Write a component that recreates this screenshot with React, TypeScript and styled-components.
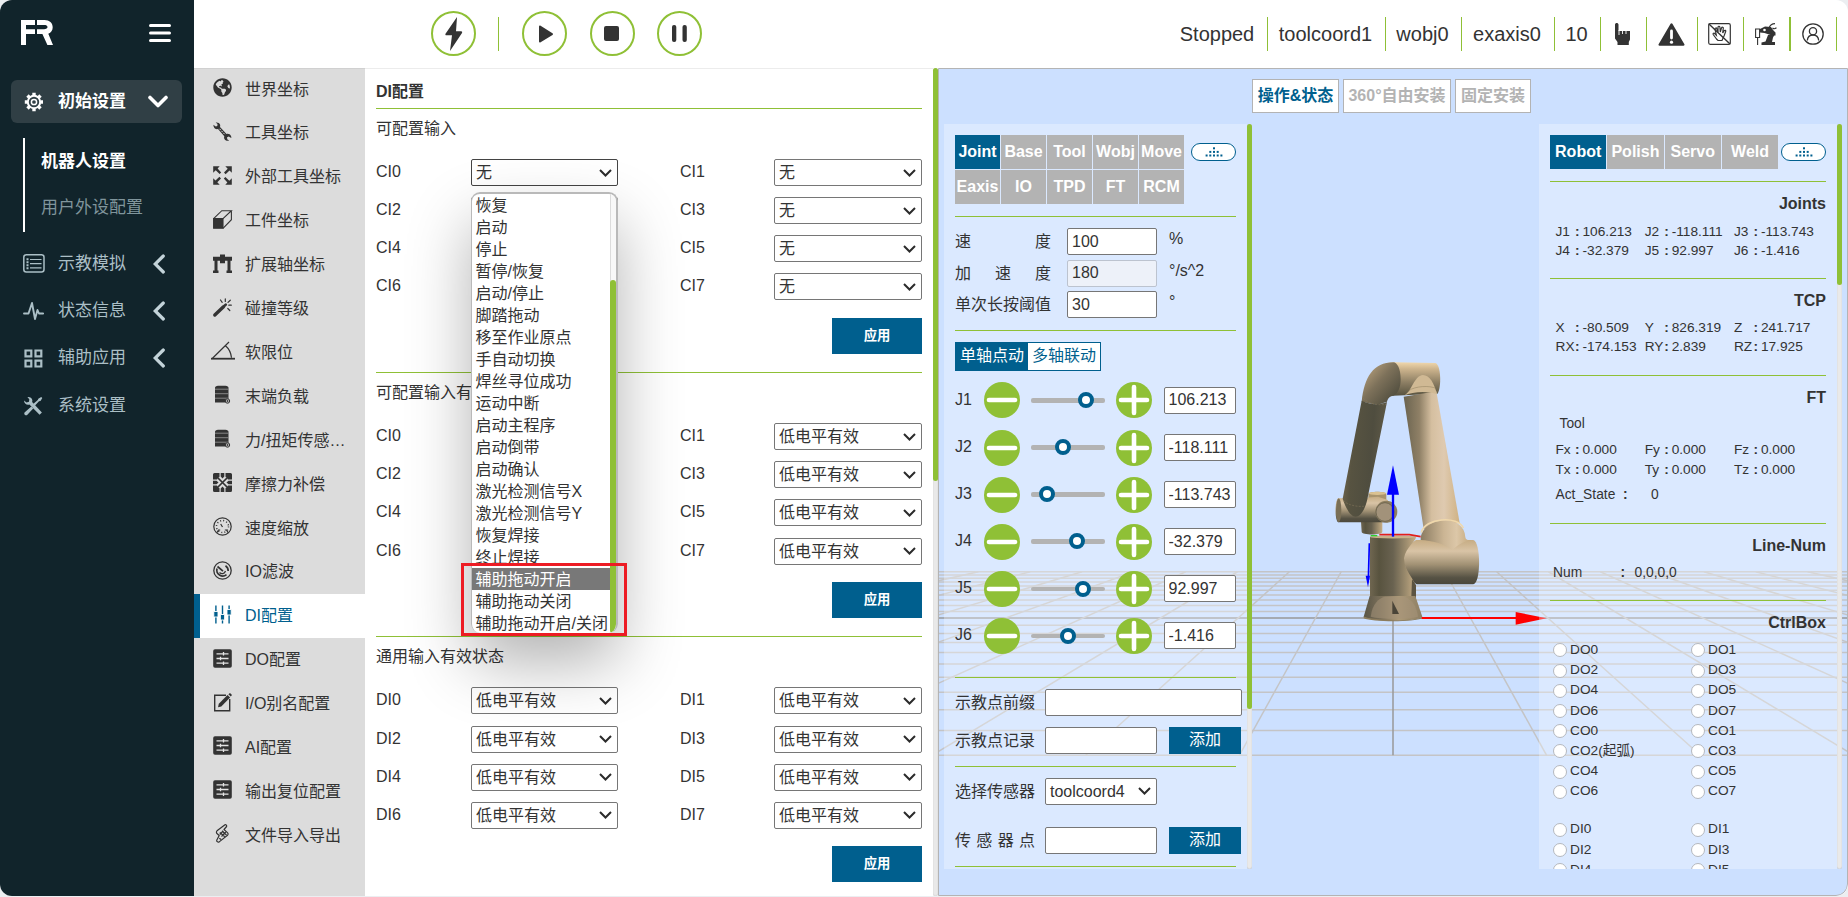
import React from "react";
import styled, { createGlobalStyle, css } from "styled-components";
import { FaGlobeAmericas } from "react-icons/fa";

const GREEN = "#8fc036";
const BLUE = "#005f8e";
const GREY = "#b3b3b3";
const INK = "#333333";

const GlobalStyle = createGlobalStyle`
  * { box-sizing: border-box; }
  html, body { margin: 0; height: 897px; overflow: hidden; background: #eceef1; }
  body { font-family: "Liberation Sans", "Noto Sans CJK SC", sans-serif; font-size: 16px; color: ${INK}; }
  input { font: inherit; color: inherit; }
`;

/* ---------- shell ---------- */
const Shell = styled.div`
  display: flex;
  width: 1848px;
  height: 896px;
  border-radius: 12px;
  overflow: hidden;
  background: #fff;
`;
const Body = styled.div`
  flex: 1;
  display: flex;
  flex-direction: column;
  min-width: 0;
`;
const Columns = styled.div`
  flex: 1;
  display: flex;
  min-height: 0;
`;

/* ---------- primary sidebar ---------- */
const Sidebar = styled.nav`
  width: 194px;
  flex: none;
  background: #11242b;
  color: #abbfc6;
  font-size: 17px;
`;
const Brand = styled.div`
  display: flex;
  justify-content: space-between;
  padding: 20px 23px 0 21px;
  height: 80px;
`;
const NavItem = styled.div<{ $active?: boolean }>`
  display: flex;
  align-items: center;
  height: ${(p) => (p.$active ? "43px" : "47.3px")};
  margin: 0 12px 0 11px;
  padding: 0 14px 0 12px;
  border-radius: 6px;
  ${(p) =>
    p.$active &&
    css`
      background: #303f45;
      color: #fff;
      font-weight: bold;
    `}
`;
const NavIcon = styled.span`
  display: flex;
  width: 35px;
`;
const NavText = styled.span`
  flex: 1;
  line-height: 20px;
`;
const SubNav = styled.div`
  margin: 15px 0 8px 23px;
  height: 94px;
  border-left: 2px solid #fff;
  padding: 1px 0 0 16px;
  display: flex;
  flex-direction: column;
`;
const SubNavItem = styled.div<{ $active?: boolean }>`
  height: 46px;
  line-height: 46px;
  color: ${(p) => (p.$active ? "#fff" : "#80959c")};
  font-weight: ${(p) => (p.$active ? "bold" : "normal")};
`;

/* ---------- top bar ---------- */
const TopBar = styled.header`
  height: 68px;
  flex: none;
  display: flex;
  align-items: flex-start;
  justify-content: space-between;
  padding: 0 11px 0 237px;
`;
const Controls = styled.div`
  display: flex;
  padding-top: 11px;
`;
const RoundButton = styled.div`
  width: 45px;
  height: 45px;
  border: 2px solid ${GREEN};
  border-radius: 50%;
  display: grid;
  place-items: center;
  margin-right: 22.300px;
`;
const ControlRule = styled.div`
  width: 1px;
  height: 34px;
  margin: 6px 23px 0 0;
  background: ${GREEN};
`;
const StatusBar = styled.div`
  display: flex;
  padding-top: 17px;
`;
const Status = styled.div<{ $w: number; $thick?: boolean }>`
  width: ${(p) => p.$w}px;
  height: 34px;
  display: flex;
  align-items: center;
  justify-content: center;
  padding-right: 2px;
  font-size: 20px;
  border-right: ${(p) => (p.$thick ? 2 : 1)}px solid ${GREEN};
`;

/* ---------- secondary menu ---------- */
const Menu = styled.nav`
  width: 171px;
  flex: none;
  background: #dcdcdc;
  border-top: 1px solid #d0d0d0;
`;
const MenuItem = styled.div<{ $active?: boolean }>`
  height: 43.9px;
  display: flex;
  align-items: center;
  padding: 0 17px 3.500px 19px;
  &:first-child { margin-top: -1.600px; }
  ${(p) =>
    p.$active &&
    css`
      background: #fff;
      color: ${BLUE};
      border-left: 6px solid ${BLUE};
      padding-left: 13px;
    `}
`;
const MenuIcon = styled.span`
  width: 32px;
  height: 19px;
  display: flex;
  flex: none;
  svg { overflow: visible; }
`;
const MenuText = styled.span`
  white-space: nowrap;
  overflow: hidden;
  text-overflow: ellipsis;
`;

/* ---------- DI configuration ---------- */
const Config = styled.main`
  width: 568px;
  flex: none;
  padding: 0 11px;
  border-top: 1px solid #ececec;
`;
const Heading = styled.div`
  height: 40px;
  line-height: 45px;
  font-weight: bold;
  border-bottom: 1px solid ${GREEN};
`;
const Section = styled.section`
  height: 264.200px;
  border-bottom: 1px solid ${GREEN};
  &:last-child { border: 0; }
`;
const SectionTitle = styled.div`
  height: 50px;
  line-height: 40px;
`;
const FieldGrid = styled.div`
  display: grid;
  grid-template-columns: 95px 147px 62px 94px 148px;
  grid-auto-rows: 27px;
  row-gap: 11.130px;
`;
const FieldLabel = styled.span`
  line-height: 25px;
`;
const SelectBox = styled.div<{ $w?: number; $focus?: boolean }>`
  display: flex;
  align-items: center;
  justify-content: space-between;
  width: ${(p) => (p.$w ? `${p.$w}px` : "auto")};
  height: 27px;
  padding: 0 5px 0 4px;
  border: 1px solid ${(p) => (p.$focus ? "#444" : "#767676")};
  border-radius: 2px;
  background: #fff;
  line-height: 25px;
`;
const Apply = styled.div`
  width: 90px;
  height: 36px;
  margin: 17.600px 0 0 auto;
  background: ${BLUE};
  color: #fff;
  font-weight: bold;
  font-size: 13.330px;
  line-height: 36px;
  text-align: center;
`;
const DropAnchor = styled.div`
  position: relative;
  > ${SelectBox} { background: transparent; }
`;
const DropList = styled.div`
  position: absolute;
  z-index: 5;
  top: 33px;
  left: 0;
  width: 147px;
  height: 441px;
  border: 2px solid #b9b9b9;
  border-left-width: 1.500px;
  border-bottom-width: 0;
  border-radius: 9px;
  background: #fff;
  overflow: hidden;
  display: flex;
`;
const DropShadow = styled.div`
  position: absolute;
  z-index: 4;
  top: 33px;
  left: 0;
  width: 147px;
  height: 441px;
  border-radius: 9px;
  box-shadow: 0 30px 64px rgba(0, 0, 0, 0.3);
`;
const Options = styled.div`
  flex: 1;
  white-space: nowrap;
  overflow: hidden;
`;
const Option = styled.div<{ $on?: boolean }>`
  height: 22px;
  line-height: 23.500px;
  padding-left: 3.500px;
  background: ${(p) => (p.$on ? "#787878" : "transparent")};
  color: ${(p) => (p.$on ? "#fff" : INK)};
`;
const RedFrame = styled.div`
  position: absolute;
  z-index: 6;
  top: 404px;
  left: -10px;
  width: 166px;
  height: 73px;
  border: 3px solid #ed1c24;
`;

/* ---------- scroll bars ---------- */
const Track = styled.div<{ $w: number; $light?: boolean }>`
  width: ${(p) => p.$w}px;
  flex: none;
  border-radius: ${(p) => (p.$light ? 0 : 3)}px;
  background: ${(p) => (p.$light ? "#f8f8f8" : "#e9e9e9")};
  box-shadow: inset ${(p) => (p.$light ? "1px 0 0 0 #dcdcdc" : "0 0 1px 0 #aaa")};
`;
const Thumb = styled.div<{ $h: number }>`
  height: ${(p) => p.$h}px;
  border-radius: 3px;
  background: ${GREEN};
`;
const Spacer = styled.div<{ $h: number }>`
  height: ${(p) => p.$h}px;
`;

/* ---------- robot viewport ---------- */
const Viewport = styled.div`
  position: relative;
  flex: 1;
  border: 1px solid #b4b4b4;
  border-radius: 0 0 12px 0;
  background: #cce0ff;
  overflow: hidden;
`;
const Scene = styled.svg`
  position: absolute;
  left: 0;
  top: 0;
`;
const Overlay = styled.div`
  position: relative;
  display: flex;
  flex-direction: column;
`;
const ViewTabs = styled.div`
  display: flex;
  gap: 4px;
  height: 55px;
  padding: 10px 0 0 313px;
`;
const ViewTab = styled.div<{ $w: number; $active?: boolean }>`
  width: ${(p) => p.$w}px;
  height: 34px;
  background: #fff;
  border: 1px solid ${GREY};
  color: ${(p) => (p.$active ? BLUE : GREY)};
  font-weight: bold;
  line-height: 31px;
  text-align: center;
  white-space: nowrap;
`;
const Panels = styled.div`
  display: flex;
  justify-content: space-between;
  padding: 0 5px;
  height: 744.700px;
`;
const Panel = styled.div`
  display: flex;
  overflow: hidden;
`;
const PanelBody = styled.div<{ $w: number }>`
  width: ${(p) => p.$w}px;
  padding: 11px 0 0 11px;
  background: rgba(255, 255, 255, 0.3);
  overflow: hidden;
`;
const Rule = styled.div<{ $w: number; $t: number; $b: number }>`
  width: ${(p) => p.$w}px;
  height: 1px;
  margin: ${(p) => p.$t}px 0 ${(p) => p.$b}px;
  background: ${GREEN};
`;
const TabHead = styled.div<{ $w: number }>`
  display: flex;
  align-items: flex-start;
  justify-content: space-between;
  width: ${(p) => p.$w}px;
`;
const TabGrid = styled.div<{ $cols: number; $cell: string }>`
  display: grid;
  grid-template-columns: repeat(${(p) => p.$cols}, ${(p) => p.$cell});
  grid-auto-rows: 34px;
  gap: 1px;
`;
const Tab = styled.div<{ $active?: boolean }>`
  display: flex;
  align-items: center;
  justify-content: center;
  padding: 0 0 1px;
  background: ${(p) => (p.$active ? BLUE : GREY)};
  color: #fff;
  font-weight: bold;
  overflow: hidden;
`;
const Pill = styled.div`
  width: 45px;
  height: 18px;
  margin-top: 8px;
  border: 1.500px solid ${BLUE};
  border-radius: 10px;
  background: #fff;
  display: grid;
  place-items: center;
`;
const SpeedRow = styled.div`
  display: flex;
  height: 31.500px;
`;
const Spread = styled.span<{ $w: number }>`
  width: ${(p) => p.$w}px;
  line-height: 27px;
  text-align-last: justify;
  white-space: nowrap;
`;
const Input = styled.input<{ $w: number; $ml?: number; $pad?: number }>`
  width: ${(p) => p.$w}px;
  height: 27px;
  margin-left: ${(p) => p.$ml ?? 0}px;
  padding: 0 0 0 ${(p) => p.$pad ?? 4}px;
  border: 1px solid #767676;
  border-radius: 2px;
  background: #fff;
  outline: none;
  &:disabled {
    border-color: #bcc3cf;
    background: #edf1f9;
    color: ${INK};
  }
`;
const Unit = styled.span`
  margin-left: 12px;
  line-height: 21px;
`;
const Toggle = styled.div`
  display: flex;
  width: 146px;
  height: 29px;
  margin-bottom: 5.900px;
  border: 1px solid ${BLUE};
  background: #fff;
`;
const ToggleHalf = styled.div<{ $on?: boolean }>`
  width: 72px;
  line-height: 26px;
  text-align: center;
  background: ${(p) => (p.$on ? BLUE : "#fff")};
  color: ${(p) => (p.$on ? "#fff" : BLUE)};
`;
const JointRow = styled.div`
  display: flex;
  align-items: center;
  height: 47.100px;
`;
const JointName = styled.span`
  width: 29px;
  padding-bottom: 1px;
`;
const Slider = styled.div`
  position: relative;
  width: 74px;
  height: 4.500px;
  margin: 0 11px;
  border-radius: 2px;
  background: ${GREY};
`;
const Knob = styled.span`
  position: absolute;
  top: -6px;
  width: 16px;
  height: 16px;
  margin-left: -8px;
  border: 4px solid ${BLUE};
  border-radius: 50%;
  background: #fff;
`;
const FormRow = styled.div<{ $h: number }>`
  display: flex;
  height: ${(p) => p.$h}px;
`;
const AddButton = styled.div`
  width: 72px;
  height: 27px;
  margin-left: 12px;
  background: ${BLUE};
  color: #fff;
  line-height: 26px;
  text-align: center;
`;

/* ---------- status panel ---------- */
const InfoTitle = styled.div<{ $b: number }>`
  width: 276px;
  height: 20px;
  margin-bottom: ${(p) => p.$b}px;
  line-height: 21.500px;
  text-align: right;
  font-weight: bold;
`;
const InfoGrid = styled.div`
  display: grid;
  grid-template-columns: repeat(3, 89.200px);
  grid-auto-rows: 19.100px;
  padding-left: 5.500px;
  font-size: 13.700px;
  line-height: 19px;
`;
const Pair = styled.div`
  display: grid;
  grid-template-columns: 19.500px 7.500px auto;
  white-space: nowrap;
`;
const InfoLine = styled.div<{ $pad: number; $t: number; $cols: string }>`
  display: grid;
  grid-template-columns: ${(p) => p.$cols};
  height: 19px;
  margin-top: ${(p) => p.$t}px;
  padding-left: ${(p) => p.$pad}px;
  font-size: 13.800px;
  line-height: 20px;
`;
const LampGrid = styled.div<{ $t: number }>`
  display: grid;
  grid-template-columns: 138px 138px;
  grid-auto-rows: 20.200px;
  margin-top: ${(p) => p.$t}px;
  padding-left: 3px;
  font-size: 13.700px;
`;
const Lamp = styled.div`
  display: flex;
  align-items: center;
  gap: 3.500px;
  white-space: nowrap;
  line-height: 18px;
  &::before {
    content: "";
    width: 12px;
    height: 12px;
    margin-top: 1px;
    margin-left: -0.500px;
    border: 1px solid #b5b8be;
    border-radius: 50%;
    background: #fff;
  }
`;

/* ---------- icons ---------- */
const Chevron = () => (
  <svg width="13" height="8" viewBox="0 0 13 8" fill="none" stroke="#2b2b2b" strokeWidth="2">
    <path d="M1 1l5.500 5.500L12 1" />
  </svg>
);
const OpenChevron = () => (
  <svg width="20" height="13" viewBox="0 0 20 13" fill="none" stroke="#fff" strokeWidth="3.600" strokeLinejoin="round" strokeLinecap="round">
    <path d="M2 2.500l8 8 8-8" />
  </svg>
);
const ClosedChevron = () => (
  <svg width="15" height="20" viewBox="0 0 15 20" fill="none" stroke="#c3d3d9" strokeWidth="3.200" strokeLinecap="round">
    <path d="M10.300 2L2.200 10l8.100 8" />
  </svg>
);
const Dots = () => (
  <svg width="18" height="10" viewBox="0 0 18 10" fill={BLUE}>
    {[[9], [5.3, 9, 12.7], [1.6, 5.3, 9, 12.7, 16.4]].map((xs, r) =>
      xs.map((x) => <rect key={`${r}-${x}`} x={x - 1} y={0.3 + r * 3.6} width="2" height="2" />)
    )}
  </svg>
);
const Logo = () => (
  <svg width="32" height="25" viewBox="0 0 32 25" fill="#fff">
    <path d="M0 0h14v5H5v4.200h9V14H5v11H0z" />
    <path d="M16 0h7.500c5 0 8.200 3 8.200 7.300 0 3.200-1.700 5.500-4.400 6.400L32 25h-5.600l-5-11H16V9.200h7c2.200 0 3.500-.6 3.500-2.100S25.200 5 23 5h-7z" />
  </svg>
);
const Burger = () => (
  <svg width="22" height="23" viewBox="0 -4 22 23" stroke="#fff" strokeWidth="3" strokeLinecap="round">
    <path d="M1.500 1.500h19M1.500 9h19M1.500 16.500h19" />
  </svg>
);
const GearIcon = () => (
  <svg width="20" height="20" viewBox="0 0 20 20" fill="none" stroke="#fff">
    <circle cx="11" cy="10" r="6.200" strokeWidth="2" />
    <circle cx="11" cy="10" r="2.600" strokeWidth="1.500" />
    {[0, 45, 90, 135, 180, 225, 270, 315].map((a) => (
      <path key={a} d="M11 .8v2.600" strokeWidth="3.400" transform={`rotate(${a} 11 10)`} />
    ))}
  </svg>
);
const ListIcon = () => (
  <svg width="22" height="19" viewBox="0 0 22 19" fill="none" stroke="#abbfc6" strokeWidth="1.500">
    <rect x=".8" y=".8" width="20.200" height="17.200" rx="2.500" />
    <path d="M3.500 5.200h2M3.500 8.200h2M3.500 11.200h2M3.500 14.200h2" strokeWidth="1.900" />
    <path d="M7 5.500h11.500M7 9.700h11.500M7 13.900h11.500" strokeWidth="1.200" />
  </svg>
);
const PulseIcon = () => (
  <svg width="21" height="20" viewBox="0 0 21 20" fill="none" stroke="#abbfc6" strokeWidth="1.900" strokeLinejoin="round" strokeLinecap="round">
    <path d="M1 12.500h4.500L9 2l3 16 2.500-9 1.500 3.500h4.200" />
  </svg>
);
const GridIcon = () => (
  <svg width="20" height="19" viewBox="0 0 20 19" fill="none" stroke="#abbfc6" strokeWidth="2.200">
    <path d="M2.500 1.500h5.800v5.800H2.500zM12.500 1.500h5.800v5.800h-5.800zM2.500 11.700h5.800v5.800H2.500zM12.500 11.700h5.800v5.800h-5.800z" />
  </svg>
);
const ToolsIcon = () => (
  <svg width="20" height="20" viewBox="0 0 20 20" fill="#abbfc6">
    <path d="M1 4.500L3.500 6.600 6 5.800 6.300 3.200 4.400 1c2.200-.5 4.500.9 4.900 3 .1.700 0 1.400-.2 2l9.800 10.500-2.300 2.300L6.400 8.600C3.700 9.500 1 7.300 1 4.500z" />
    <path d="M15.300 2.800L18.200.9 19.300 2 17.500 5l-1.500.3-4.200 4.400-1.600-1.700 4.600-4zM8.300 10.600l1.900 1.900-5.800 6.300c-.7.700-1.900.7-2.600 0s-.7-1.800 0-2.500z" />
  </svg>
);

const box = { width: 19, height: 19, viewBox: "0 0 19 19" };
const DoubleWrench = () => (
  <svg {...box} fill={INK}>
    <path d="M.3 2.800l2.500 1.800 1.500-.7.200-2L2.700.6c1.800-.5 3.800.4 4.400 2.200.2.800.2 1.500-.1 2.200l6.500 7c1.800-.5 3.700.2 4.500 1.900.3.700.4 1.500.3 2.200l-2.600-1.700-1.600.8.100 2 1.900 1.400c-2 .6-4.300-.3-4.900-2.200-.2-.8-.2-1.500.1-2.200L5 7.100C3 7.600.5 6.500.3 2.800z" />
    <path d="M6.500 6.800l5.500 5.800" stroke="#dcdcdc" strokeWidth="1" strokeDasharray="1.800 1" />
  </svg>
);
const ExpandIcon = () => (
  <svg {...box} fill={INK}>
    {[0, 90, 180, 270].map((a) => (
      <path key={a} transform={`rotate(${a} 9.500 9.500)`} d="M.2.2h6.500L4.600 2.500 8.200 6.400 6.600 8 2.700 4.300.2 6.700z" />
    ))}
  </svg>
);
const CubeIcon = () => (
  <svg {...box} fill="none" stroke={INK} strokeWidth="1.100">
    <path d="M.6 8.600h9.400v9.700H.6z" fill={INK} />
    <path d="M.6 8.600L8.800.7h9.600L10 8.600M18.400.7v9L10 18.300" />
  </svg>
);
const GantryIcon = () => (
  <svg {...box} fill={INK}>
    <path d="M0 2.800h7V.5h5v2.300h7v3.900h-1.500v9.800H19V19h-5.500v-2.500h1V6.700H12v2.500H7V6.700H4.500v9.800h1V19H0v-2.500h1.500V6.700H0z" />
  </svg>
);
const WandIcon = () => (
  <svg {...box} stroke={INK} fill="none" strokeLinecap="round">
    <path d="M1.800 17L10.500 8.800" strokeWidth="3.400" />
    <path d="M11.500 7.800l1.300-1.200" strokeWidth="2.600" />
    <path d="M7.500 2l1.700 2.300M12.300.9v2.600M17.300 2.200l-2.300 2.200M18.300 7.200h-2.500M14.800 10.500l2 2" strokeWidth="1.200" />
  </svg>
);
const AngleIcon = () => (
  <svg width="24" height="19" viewBox="2 0 24 19" fill="none" stroke={INK} strokeWidth="1.200">
    <path d="M0 17.700h24" strokeWidth="1.800" />
    <path d="M1.500 17.200L18 1M14.500 4.800c3.500 3 5.500 7 6 12" />
  </svg>
);
const BarrelIcon = () => (
  <svg {...box}>
    <path d="M2 3c0-1.200 1.200-2.200 3-2.200h7.500c1.800 0 3 1 3 2.200v14.500H2z" fill={INK} />
    <path d="M2 4.200h13.500M2 8.700h13.500M2 13.200h13.500" stroke="#9a9a9a" strokeWidth=".8" />
    <circle cx="14.500" cy="16" r="2.200" fill="#dcdcdc" stroke={INK} strokeWidth="1" />
    <path d="M13.200 16h2.600M14.500 14.700v2.600" stroke={INK} strokeWidth=".8" />
  </svg>
);
const FrictionIcon = () => (
  <svg {...box} fill={INK}>
    <path d="M0 1.500Q0 0 1.500 0h5v6.500H0zM12.500 0h5Q19 0 19 1.500v5h-6.500zM0 12.500h6.500V19h-5Q0 19 0 17.500zM12.500 12.500H19v5q0 1.500-1.500 1.500h-5zM7.700 0h3.600v3.500L9.500 5.500 7.700 3.500zM7.700 19h3.600v-3.500l-1.800-2-1.800 2zM0 7.700h3.500l2 1.800-2 1.800H0zM19 7.700h-3.500l-2 1.800 2 1.800H19z" />
    <path d="M5 5l9 9M14 5l-9 9" stroke="#dcdcdc" strokeWidth="3.200" />
    <path d="M4.500 4.500l10 10M14.500 4.500l-10 10" stroke={INK} strokeWidth="1.700" />
  </svg>
);
const GaugeIcon = () => (
  <svg {...box} fill="none" stroke={INK} strokeWidth="1.200">
    <circle cx="9.500" cy="9.500" r="8.700" />
    <circle cx="9.500" cy="9.500" r="6" strokeDasharray="1 2.140" strokeWidth="1.500" />
    <path d="M7.700 7l1.800 3M3.800 15.800L5.500 13h1.700M15.200 15.800L13.500 13h-1.700" />
  </svg>
);
const FilterIcon = () => (
  <svg {...box} fill="none" stroke={INK} strokeWidth="1.300">
    <circle cx="9.500" cy="9.500" r="8.700" />
    <path d="M4 7.500a6 6 0 0 0 9.500 6.200M15.200 10A6 6 0 0 0 12.500 4.800M4.500 5.500l5.500 4.700" strokeWidth="1.700" />
    <path d="M6.500 11.500c2 1.800 5 1.400 6-1.500" />
  </svg>
);
const SlidersIcon = () => (
  <svg {...box} fill={BLUE}>
    <path d="M2.200.5h1.400v18H2.200zM8.800.5h1.400v18H8.800zM15.400.5h1.400v18h-1.400z" />
    <path d="M.8 6.500h4.200v5.500H.8zM7.400 9.500h4.200V15H7.400zM14 4.500h4.200V10H14z" stroke="#fff" strokeWidth=".9" />
  </svg>
);
const PanelIcon = () => (
  <svg {...box}>
    <rect x=".2" y=".2" width="18.600" height="18.600" rx="1.800" fill={INK} />
    <path d="M3.500 4.800h12M3.500 9.500h12M3.500 14.200h12M10.500 3v3.600M7.500 7.700v3.600M10.500 12.400V16" stroke="#e4e4e4" strokeWidth="1.300" />
  </svg>
);
const EditIcon = () => (
  <svg {...box} fill="none" stroke={INK} strokeWidth="1.400">
    <path d="M13 2.200H1.700v15.500h15V6" />
    <path d="M5 14.200l.8-3.400L14.500 2l2.600 2.600-8.800 8.800z" fill={INK} stroke="none" />
    <path d="M15.400 1.200L17 0l2 2-1.200 1.600z" fill={INK} stroke="none" />
  </svg>
);
const ScrollIcon = () => (
  <svg {...box} fill="none" stroke={INK} strokeWidth="1.200" strokeLinejoin="round">
    <path d="M12 .8L4 6.800c-.9.900-.7 2.200.2 2.900l2 1.800-2.500 4.800c-.2 1.200 1.300 2.300 2.500 1.600l8.300-6.600c.9-.8.700-2-.1-2.700L11 5.500l2.600-3c.4-1-.6-2.100-1.600-1.700z" />
    <path d="M6.800 8.500l5 4.300M9 7l4.500 4M8.500 12.500L12.800 8M6.800 10.500l3.500-3.700M6.300 14.200l1.800 1.300" />
  </svg>
);

const menu: [string, React.ReactNode][] = [
  ["世界坐标", <FaGlobeAmericas size={19} color={INK} />],
  ["工具坐标", <DoubleWrench />],
  ["外部工具坐标", <ExpandIcon />],
  ["工件坐标", <CubeIcon />],
  ["扩展轴坐标", <GantryIcon />],
  ["碰撞等级", <WandIcon />],
  ["软限位", <AngleIcon />],
  ["末端负载", <BarrelIcon />],
  ["力/扭矩传感器负载", <BarrelIcon />],
  ["摩擦力补偿", <FrictionIcon />],
  ["速度缩放", <GaugeIcon />],
  ["IO滤波", <FilterIcon />],
  ["DI配置", <SlidersIcon />],
  ["DO配置", <PanelIcon />],
  ["I/O别名配置", <EditIcon />],
  ["AI配置", <PanelIcon />],
  ["输出复位配置", <PanelIcon />],
  ["文件导入导出", <ScrollIcon />],
];

const options = [
  "恢复", "启动", "停止", "暂停/恢复", "启动/停止", "脚踏拖动", "移至作业原点", "手自动切换", "焊丝寻位成功", "运动中断",
  "启动主程序", "启动倒带", "启动确认", "激光检测信号X", "激光检测信号Y", "恢复焊接", "终止焊接", "辅助拖动开启", "辅助拖动关闭", "辅助拖动开启/关闭",
];

const Select = ({ value, w, focus }: { value: string; w?: number; focus?: boolean }) => (
  <SelectBox $w={w} $focus={focus}>
    <span>{value}</span>
    <Chevron />
  </SelectBox>
);

const ConfigSection = ({ title, prefix, value, dropdown }: { title: string; prefix: string; value: string; dropdown?: boolean }) => (
  <Section>
    <SectionTitle>{title}</SectionTitle>
    <FieldGrid>
      {[0, 2, 4, 6].map((n) => (
        <React.Fragment key={n}>
          <FieldLabel>{`${prefix}${n}`}</FieldLabel>
          {dropdown && n === 0 ? (
            <DropAnchor>
              <Select value={value} focus />
              <DropShadow />
              <DropList>
                <Options>
                  {options.map((o) => (
                    <Option key={o} $on={o === "辅助拖动开启"}>{o}</Option>
                  ))}
                </Options>
                <Track $w={6.5} $light>
                  <Spacer $h={86} />
                  <Thumb $h={353} />
                </Track>
              </DropList>
              <RedFrame />
            </DropAnchor>
          ) : (
            <Select value={value} />
          )}
          <span />
          <FieldLabel>{`${prefix}${n + 1}`}</FieldLabel>
          <Select value={value} />
        </React.Fragment>
      ))}
    </FieldGrid>
    <Apply>应用</Apply>
  </Section>
);

/* Ground grid seen in perspective: rows recede toward the horizon at y=478.3 */
const rowY = (i: number) => 478.3 + 2820 / (20.18 - i);
const colX = (i: number, j: number) => 1393 + (j * 1564) / (20.18 - i);
const steps = Array.from({ length: 21 }, (_, k) => k - 10);

const RobotScene = () => (
  <Scene width="908" height="826" viewBox="939 69 908 826">
    <defs>
      <linearGradient id="arm" x1="0" x2="1">
        <stop offset="0" stopColor="#6a634f" /><stop offset=".28" stopColor="#8f8066" /><stop offset=".5" stopColor="#d5bfa0" />
        <stop offset=".72" stopColor="#dfcab0" /><stop offset="1" stopColor="#cfb284" />
      </linearGradient>
      <linearGradient id="fore" x1="0" y1="0" x2="1" y2=".2">
        <stop offset="0" stopColor="#7b6f55" /><stop offset=".3" stopColor="#575341" /><stop offset=".7" stopColor="#4f4d3f" /><stop offset="1" stopColor="#5e5947" />
      </linearGradient>
      <linearGradient id="elbow" x1="0" y1="0" x2="0" y2="1">
        <stop offset="0" stopColor="#f0d7ac" /><stop offset=".2" stopColor="#cdb48d" /><stop offset=".6" stopColor="#8d7f64" /><stop offset="1" stopColor="#57523f" />
      </linearGradient>
      <linearGradient id="bend" x1="0" y1="0" x2="1" y2="1">
        <stop offset="0" stopColor="#c9af87" /><stop offset=".45" stopColor="#7d715a" /><stop offset=".8" stopColor="#565242" />
      </linearGradient>
      <linearGradient id="tube" x1="0" y1="0" x2="0" y2="1">
        <stop offset="0" stopColor="#c6ac83" /><stop offset=".25" stopColor="#d9c4a6" /><stop offset=".55" stopColor="#a29275" /><stop offset=".85" stopColor="#565244" /><stop offset="1" stopColor="#4b483b" />
      </linearGradient>
      <linearGradient id="column" x1="0" x2="1">
        <stop offset="0" stopColor="#6f6650" /><stop offset=".2" stopColor="#58533f" /><stop offset=".5" stopColor="#696250" /><stop offset=".8" stopColor="#a08f70" /><stop offset="1" stopColor="#c8ae85" />
      </linearGradient>
      <linearGradient id="foot" x1="0" x2="1">
        <stop offset="0" stopColor="#5a5546" /><stop offset=".3" stopColor="#7b705a" /><stop offset=".6" stopColor="#ad9a78" /><stop offset="1" stopColor="#8d7e63" />
      </linearGradient>
      <linearGradient id="collar" x1="0" x2="1">
        <stop offset="0" stopColor="#8b7c62" /><stop offset=".45" stopColor="#cbb594" /><stop offset=".7" stopColor="#dcc7a8" /><stop offset="1" stopColor="#c2a67a" />
      </linearGradient>
    </defs>
    <g stroke="#c4c4c6" strokeWidth="1.500">
      {steps.map((i) => (
        <line key={`r${i}`} x1={colX(i, -10)} x2={colX(i, 10)} y1={rowY(i)} y2={rowY(i)} stroke={i === 0 ? "#999" : undefined} />
      ))}
      {steps.map((j) => (
        <line key={`c${j}`} x1={colX(-10, j)} x2={colX(10, j)} y1={rowY(-10)} y2={rowY(10)} stroke={j === 0 ? "#999" : undefined} />
      ))}
    </g>
    <g transform="translate(1250 330) scale(.33333)">
      <path d="M358 640l-3 110" stroke="#00f" strokeWidth="5" />
      <path d="M347 737h13l-6 35z" fill="#00f" />
      {/* wrist */}
      <path d="M355 492c0-9 54-9 54 0v24h-54z" fill="#a9946d" />
      <ellipse cx="382" cy="490" rx="26" ry="5" fill="#dbc291" />
      <path d="M333 575h64v30c0 11-62 11-62 0z" fill="url(#column)" />
      <path d="M264 505h60l60-5 30 10v67H264c-10-10-10-62 0-72z" fill="url(#tube)" />
      <ellipse cx="266" cy="541" rx="8" ry="36" fill="#7a6f56" />
      <circle cx="409" cy="545" r="33" fill="#8e7f61" />
      <ellipse cx="405" cy="546" rx="27" ry="28" fill="#a2927a" stroke="#5d5744" strokeWidth="2" />
      {/* elbow and forearm */}
      <path d="M400 104c10-5 20-7 33-7l122 2c18 2 20 70 8 92l-133 6-40 0z" fill="url(#elbow)" />
      <path d="M335 215c8-75 35-117 95-118 12 0 22 20 22 50 0 25-8 45-22 50-12 2-16 8-19 18l-30 10z" fill="url(#bend)" />
      <path d="M335 212c25 12 50 14 76 4l-59 292c-8 35-22 52-35 52s-26-16-39-54z" fill="url(#fore)" />
      <path d="M340 205c15 16 45 22 68 18M280 512c14 14 45 20 66 16" fill="none" stroke="#8a7b5f" strokeDasharray="6 4" strokeWidth="1.500" />
      {/* upper arm */}
      <path d="M461 200l98-16 70 395-108 18z" fill="url(#arm)" />
      <path d="M461 197c25-10 30-60 58-62 20 0 34 25 42 58-25-10-70-10-100 4z" fill="#d0b994" />
      <path d="M476 182c20-14 62-16 82-7" fill="none" stroke="#8e7d5e" strokeWidth="1.500" />
      {/* shoulder */}
      <path d="M498 630h172c22 4 24 128 0 133H500c-18-10-28-30-42-75 4-20 18-45 40-58z" fill="url(#tube)" />
      <path d="M512 630c0-70 132-82 134-8 2 10 10 8 20 8-30 5-40 15-60 30-25-20-60-28-94-30z" fill="url(#collar)" />
      <path d="M514 608c10-45 110-52 126-14" fill="none" stroke="#f0d8ab" strokeWidth="5" />
      {/* base */}
      <path d="M360 620h138c0 15-30 30-36 65 2 40 28 55 34 85l-1 32H360z" fill="url(#column)" />
      <path d="M486 748l12 17v40l-14-5z" fill="#5b5341" />
      <ellipse cx="429" cy="621" rx="69" ry="4.500" fill="#c9b189" />
      <path d="M359 798h137l21 62c-20 16-150 16-176 0z" fill="url(#foot)" />
      <path d="M362 860c5-40 25-55 42-60h60c25 10 36 30 40 60-30 8-110 8-142 0z" fill="#a5947a" opacity=".55" />
      <path d="M427 812l20 40h-20z" fill="#4a4538" />
      <path d="M341 859c25 14 150 16 176 2v4c-25 12-150 12-176 0z" fill="#8d7d5e" />
      {/* axes */}
      <path d="M362 617h20" stroke="#2fd02f" strokeWidth="4" />
      <path d="M388 614h90l34 6" fill="none" stroke="#e2201c" strokeWidth="5" />
      <path d="M429 620V490" stroke="#00f" strokeWidth="7" />
      <path d="M411 494h36l-18-88z" fill="#00f" />
      <path d="M515 864h286" stroke="#f00" strokeWidth="6" />
      <path d="M797 846v38l93-19z" fill="#f00" />
    </g>
  </Scene>
);

const joints: [string, string, number][] = [
  ["J1", "106.213", 55], ["J2", "-118.111", 32], ["J3", "-113.743", 16], ["J4", "-32.379", 46.3], ["J5", "92.997", 52.3], ["J6", "-1.416", 36.7],
];

const Jog = ({ plus }: { plus?: boolean }) => (
  <svg width="36" height="36" viewBox="0 0 36 36">
    <circle cx="18" cy="18" r="18" fill={GREEN} />
    <path d={plus ? "M5 18h26M18 5v26" : "M5 18h26"} stroke="#fff" strokeWidth="4.600" strokeLinecap="round" />
  </svg>
);

const Pairs = ({ rows }: { rows: [string, string][] }) => (
  <InfoGrid>
    {rows.map(([k, v]) => (
      <Pair key={k}>
        <span>{k}</span>
        <b>:</b>
        <span>{v}</span>
      </Pair>
    ))}
  </InfoGrid>
);

const HandIcon = () => (
  <svg width="16" height="22" viewBox="0 0 16 22" fill={INK}>
    <path d="M0 1.500C0 .6.800 0 1.700 0s1.800.6 1.800 1.500V8H15v8.500L13.800 19v3H2.500v-3L0 15.500z" />
    <path d="M4 7v5M7.500 7v4M11 7v4" stroke="#fff" strokeWidth=".9" />
  </svg>
);
const WarningIcon = () => (
  <svg width="27" height="23" viewBox="0 0 27 23">
    <path d="M12.600.8c.4-.7 1.400-.7 1.800 0l12 20.500c.4.700-.1 1.500-.9 1.500h-24c-.8 0-1.300-.8-.9-1.500z" fill={INK} />
    <path d="M13.500 8v7" stroke="#fff" strokeWidth="2.800" strokeLinecap="round" />
    <circle cx="13.500" cy="19.200" r="1.600" fill="#fff" />
  </svg>
);
const NoHandIcon = () => (
  <svg width="23" height="22" viewBox="0 0 23 22" fill="none" stroke={INK} strokeWidth="1.200">
    <rect x=".7" y=".7" width="21.600" height="20.600" rx="1.500" />
    <path d="M.7.700l21.600 20.600" strokeWidth="1.400" />
    <path d="M8.500 16l-3.300-4.500c-.5-1 .8-1.800 1.500-1l1.600 1.600L7 6c0-1.200 1.500-1.400 1.800-.3L10 9V4c.2-1 1.700-1 1.900 0l.4 5 1.300-4.300c.5-1 1.900-.5 1.700.5L14.700 10l1.500-2.300c.7-.9 1.900-.2 1.500.8L16 13l-2 4.500h-4z" />
  </svg>
);
const ArmIcon = () => (
  <svg width="22" height="22" viewBox="0 0 22 22" fill={INK}>
    <path d="M.6 6h4v8.500h-4zM2.600 14.500V22" fill="none" stroke={INK} strokeWidth="1.100" />
    <path d="M5 6l5-2.500 6 .5 2 3 2.500 2.500v3L17 12.500 9.500 10 5 9.500z" />
    <path d="M13 12l7-1-2 3.500-1 4.500h3v3H6.500v-2.500l4-1z" />
    <path d="M14 5c1-3 3.500-4.400 6-4.400M17.500 4.800c1 1.200 2.500 1.200 4 0" stroke={INK} strokeWidth="1.100" fill="none" />
    <circle cx="9.500" cy="7" r="1.300" fill="#fff" />
  </svg>
);
const UserIcon = () => (
  <svg width="22" height="22" viewBox="0 0 22 22" fill="none" stroke={INK} strokeWidth="1.300">
    <circle cx="11" cy="11" r="10.200" />
    <circle cx="11" cy="8.300" r="3.600" />
    <path d="M5.300 17.500c.3-3.500 2.500-5.500 5.700-5.500s5.400 2 5.700 5.500" />
  </svg>
);

export default function App() {
  return (
    <>
      <GlobalStyle />
      <Shell>
        <Sidebar>
          <Brand><Logo /><Burger /></Brand>
          <NavItem $active>
            <NavIcon><GearIcon /></NavIcon>
            <NavText>初始设置</NavText>
            <OpenChevron />
          </NavItem>
          <SubNav>
            <SubNavItem $active>机器人设置</SubNavItem>
            <SubNavItem>用户外设配置</SubNavItem>
          </SubNav>
          <NavItem><NavIcon><ListIcon /></NavIcon><NavText>示教模拟</NavText><ClosedChevron /></NavItem>
          <NavItem><NavIcon><PulseIcon /></NavIcon><NavText>状态信息</NavText><ClosedChevron /></NavItem>
          <NavItem><NavIcon><GridIcon /></NavIcon><NavText>辅助应用</NavText><ClosedChevron /></NavItem>
          <NavItem><NavIcon><ToolsIcon /></NavIcon><NavText>系统设置</NavText></NavItem>
        </Sidebar>
        <Body>
          <TopBar>
            <Controls>
              <RoundButton>
                <svg width="18" height="34" viewBox="0 0 18 34" fill={INK}><path d="M12 0L.5 16.800c-.4.800 0 1.500.8 1.500H7L5 34 17 16c.5-.9.100-1.700-.9-1.700H11z" /></svg>
              </RoundButton>
              <ControlRule />
              <RoundButton>
                <svg width="18" height="18" viewBox="0 0 18 18" fill={INK}><path d="M3 1.500c0-1 .8-1.300 1.600-.8L16.500 8.200c.7.500.7 1.200 0 1.700L4.600 17.300c-.8.500-1.600.2-1.600-.8z" /></svg>
              </RoundButton>
              <RoundButton>
                <svg width="16" height="15" viewBox="0 0 16 15" fill={INK}><rect width="15" height="15" rx="2" /></svg>
              </RoundButton>
              <RoundButton>
                <svg width="15" height="17" viewBox="0 0 15 17" fill={INK}><rect width="4.300" height="17" rx="2" /><rect x="10.500" width="4.300" height="17" rx="2" /></svg>
              </RoundButton>
            </Controls>
            <StatusBar>
              <Status $w={99}>Stopped</Status>
              <Status $w={118}>toolcoord1</Status>
              <Status $w={76}>wobj0</Status>
              <Status $w={93}>exaxis0</Status>
              <Status $w={46}>10</Status>
              <Status $w={46}><HandIcon /></Status>
              <Status $w={51}><WarningIcon /></Status>
              <Status $w={46}><NoHandIcon /></Status>
              <Status $w={47} $thick><ArmIcon /></Status>
              <Status $w={46}><UserIcon /></Status>
            </StatusBar>
          </TopBar>
          <Columns>
            <Menu>
              {menu.map(([label, icon]) => (
                <MenuItem key={label} $active={label === "DI配置"}>
                  <MenuIcon>{icon}</MenuIcon>
                  <MenuText>{label}</MenuText>
                </MenuItem>
              ))}
            </Menu>
            <Config>
              <Heading>DI配置</Heading>
              <ConfigSection title="可配置输入" prefix="CI" value="无" dropdown />
              <ConfigSection title="可配置输入有效状态" prefix="CI" value="低电平有效" />
              <ConfigSection title="通用输入有效状态" prefix="DI" value="低电平有效" />
            </Config>
            <Track $w={5}><Thumb $h={412.5} /></Track>
            <Viewport>
              <RobotScene />
              <Overlay>
                <ViewTabs>
                  <ViewTab $w={87} $active>操作&amp;状态</ViewTab>
                  <ViewTab $w={108}>360°自由安装</ViewTab>
                  <ViewTab $w={76}>固定安装</ViewTab>
                </ViewTabs>
                <Panels>
                  <Panel>
                    <PanelBody $w={303}>
                      <TabHead $w={281}>
                        <TabGrid $cols={5} $cell="45px">
                          {["Joint", "Base", "Tool", "Wobj", "Move", "Eaxis", "IO", "TPD", "FT", "RCM"].map((t, i) => (
                            <Tab key={t} $active={i === 0}>{t}</Tab>
                          ))}
                        </TabGrid>
                        <Pill><Dots /></Pill>
                      </TabHead>
                      <Rule $w={281} $t={12} $b={11} />
                      <SpeedRow>
                        <Spread $w={96}>速度</Spread>
                        <Input $w={90} $ml={16} defaultValue="100" />
                        <Unit>%</Unit>
                      </SpeedRow>
                      <SpeedRow>
                        <Spread $w={96}>加速度</Spread>
                        <Input $w={90} $ml={16} defaultValue="180" disabled />
                        <Unit>°/s^2</Unit>
                      </SpeedRow>
                      <SpeedRow>
                        <Spread $w={96}>单次长按阈值</Spread>
                        <Input $w={90} $ml={16} defaultValue="30" />
                        <Unit>°</Unit>
                      </SpeedRow>
                      <Rule $w={281} $t={7.5} $b={11} />
                      <Toggle>
                        <ToggleHalf $on>单轴点动</ToggleHalf>
                        <ToggleHalf>多轴联动</ToggleHalf>
                      </Toggle>
                      {joints.map(([name, value, pos]) => (
                        <JointRow key={name}>
                          <JointName>{name}</JointName>
                          <Jog />
                          <Slider><Knob style={{ left: pos }} /></Slider>
                          <Jog plus />
                          <Input $w={72} $ml={12} $pad={3.5} defaultValue={value} />
                        </JointRow>
                      ))}
                      <Rule $w={281} $t={17.5} $b={11} />
                      <FormRow $h={38}>
                        <Spread $w={80}>示教点前缀</Spread>
                        <Input $w={197} $ml={10} />
                      </FormRow>
                      <FormRow $h={27}>
                        <Spread $w={80}>示教点记录</Spread>
                        <Input $w={112} $ml={10} />
                        <AddButton>添加</AddButton>
                      </FormRow>
                      <Rule $w={281} $t={12} $b={11} />
                      <FormRow $h={49}>
                        <Spread $w={90}>
                          <Spread as="div" $w={80}>选择传感器</Spread>
                        </Spread>
                        <Select w={112} value="toolcoord4" />
                      </FormRow>
                      <FormRow $h={27}>
                        <Spread $w={80}>传感器点</Spread>
                        <Input $w={112} $ml={10} />
                        <AddButton>添加</AddButton>
                      </FormRow>
                      <Rule $w={281} $t={12} $b={11} />
                    </PanelBody>
                    <Track $w={5}><Thumb $h={585} /></Track>
                  </Panel>
                  <Panel>
                    <PanelBody $w={298}>
                      <TabHead $w={276}>
                        <TabGrid $cols={4} $cell="56.300px">
                          {["Robot", "Polish", "Servo", "Weld"].map((t, i) => (
                            <Tab key={t} $active={i === 0}>{t}</Tab>
                          ))}
                        </TabGrid>
                        <Pill><Dots /></Pill>
                      </TabHead>
                      <Rule $w={276} $t={12} $b={11} />
                      <InfoTitle $b={8.5}>Joints</InfoTitle>
                      <Pairs rows={[["J1", "106.213"], ["J2", "-118.111"], ["J3", "-113.743"], ["J4", "-32.379"], ["J5", "92.997"], ["J6", "-1.416"]]} />
                      <Rule $w={276} $t={18.3} $b={11} />
                      <InfoTitle $b={8.3}>TCP</InfoTitle>
                      <Pairs rows={[["X", "-80.509"], ["Y", "826.319"], ["Z", "241.717"], ["RX", "-174.153"], ["RY", "2.839"], ["RZ", "17.925"]]} />
                      <Rule $w={276} $t={18.5} $b={11} />
                      <InfoTitle $b={7.5}>FT</InfoTitle>
                      <InfoLine $pad={9.5} $t={0} $cols="auto"><span>Tool</span></InfoLine>
                      <Spacer $h={7} />
                      <Pairs rows={[["Fx", "0.000"], ["Fy", "0.000"], ["Fz", "0.000"], ["Tx", "0.000"], ["Ty", "0.000"], ["Tz", "0.000"]]} />
                      <InfoLine $pad={5.5} $t={6.7} $cols="67.500px 28px auto"><span>Act_State</span><b>:</b><span>0</span></InfoLine>
                      <Rule $w={276} $t={18.5} $b={11} />
                      <InfoTitle $b={8}>Line-Num</InfoTitle>
                      <InfoLine $pad={3} $t={0} $cols="67.500px 14px auto"><span>Num</span><b>:</b><span>0,0,0,0</span></InfoLine>
                      <Rule $w={276} $t={18} $b={11} />
                      <InfoTitle $b={8}>CtrlBox</InfoTitle>
                      <LampGrid $t={0}>
                        {["DO0", "DO1", "DO2", "DO3", "DO4", "DO5", "DO6", "DO7", "CO0", "CO1", "CO2(起弧)", "CO3", "CO4", "CO5", "CO6", "CO7"].map((n) => (
                          <Lamp key={n}>{n}</Lamp>
                        ))}
                      </LampGrid>
                      <LampGrid $t={18}>
                        {["DI0", "DI1", "DI2", "DI3", "DI4", "DI5"].map((n) => (
                          <Lamp key={n}>{n}</Lamp>
                        ))}
                      </LampGrid>
                    </PanelBody>
                    <Track $w={5}><Thumb $h={161} /></Track>
                  </Panel>
                </Panels>
              </Overlay>
            </Viewport>
          </Columns>
        </Body>
      </Shell>
    </>
  );
}
